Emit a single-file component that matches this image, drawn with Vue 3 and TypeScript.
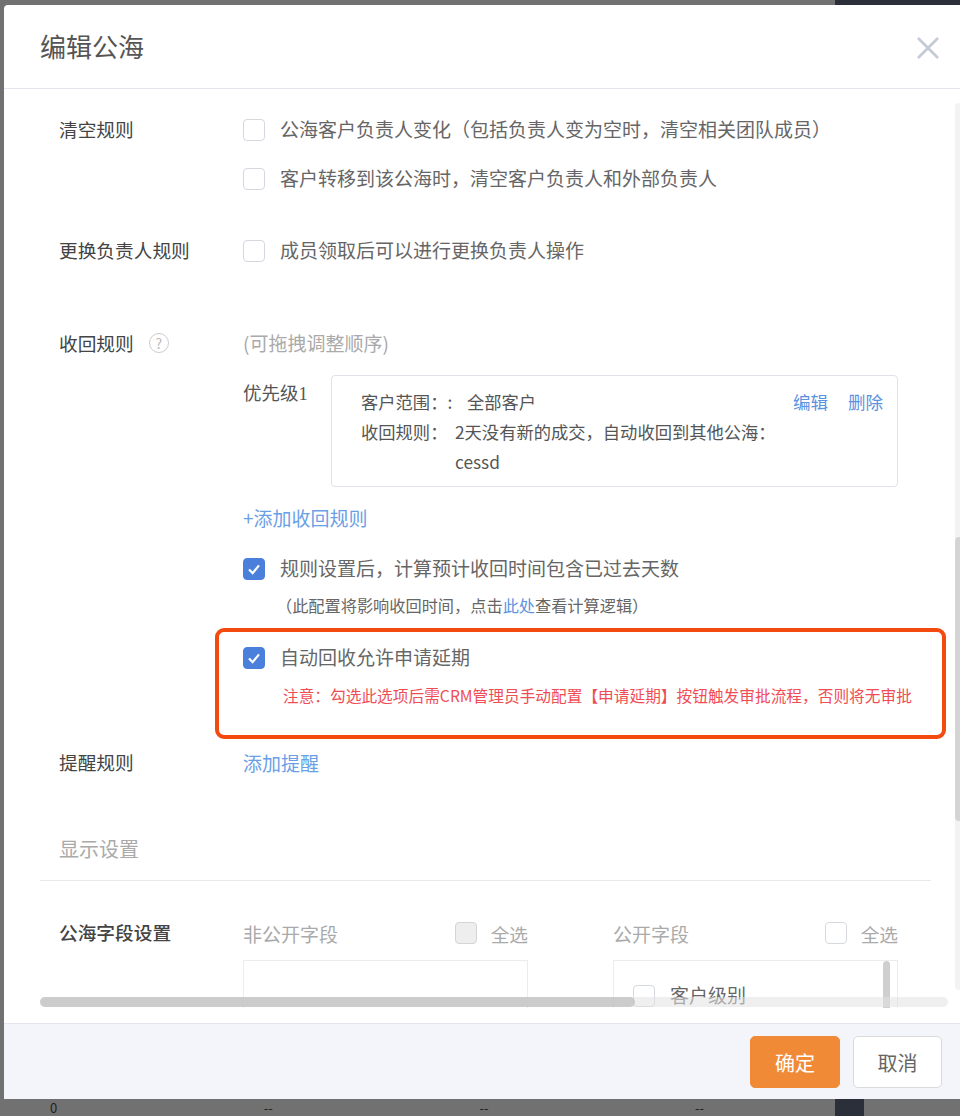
<script setup lang="ts">
interface Opt { text: string; checked?: boolean }
const clearRules: Opt[] = [
  { text: '公海客户负责人变化（包括负责人变为空时，清空相关团队成员）' },
  { text: '客户转移到该公海时，清空客户负责人和外部负责人' },
]
</script>

<template>
  <div class="page">
    <div class="dialog">
      <header class="head">
        <h1>编辑公海</h1>
        <svg class="close" viewBox="0 0 24 24" aria-hidden="true"><path d="M2 2 22 22M22 2 2 22" /></svg>
      </header>

      <main class="body">
        <div class="viewport">
          <section class="row clear">
            <div class="label">清空规则</div>
            <div class="field stack-clear">
              <label v-for="o in clearRules" :key="o.text" class="opt">
                <span class="cb"></span><span class="txt">{{ o.text }}</span>
              </label>
            </div>
          </section>

          <section class="row owner">
            <div class="label">更换负责人规则</div>
            <div class="field">
              <label class="opt"><span class="cb"></span><span class="txt">成员领取后可以进行更换负责人操作</span></label>
            </div>
          </section>

          <section class="row reclaim">
            <div class="label">收回规则<span class="help">?</span></div>
            <div class="field">
              <div class="hint">(可拖拽调整顺序)</div>
              <div class="priority">
                <div class="plabel">优先级1</div>
                <div class="rulecard">
                  <div class="ruletext">
                    <div class="kv"><span class="k k-wide">客户范围：:</span><span>全部客户</span></div>
                    <div class="kv"><span class="k">收回规则：</span><span>2天没有新的成交，自动收回到其他公海：<br />cessd</span></div>
                  </div>
                  <div class="actions"><a>编辑</a><a>删除</a></div>
                </div>
              </div>
              <a class="addrule">+添加收回规则</a>
              <label class="opt opt-calc"><span class="cb on"><svg viewBox="0 0 22 22"><path d="M5.5 11.5 9.5 15.5 16.5 7" /></svg></span><span class="txt">规则设置后，计算预计收回时间包含已过去天数</span></label>
              <div class="note">（此配置将影响收回时间，点击<a>此处</a>查看计算逻辑）</div>
            </div>
          </section>

          <section class="extend">
            <label class="opt"><span class="cb on"><svg viewBox="0 0 22 22"><path d="M5.5 11.5 9.5 15.5 16.5 7" /></svg></span><span class="txt">自动回收允许申请延期</span></label>
            <div class="warn">注意：勾选此选项后需CRM管理员手动配置【申请延期】按钮触发审批流程，否则将无审批</div>
          </section>

          <section class="row remind">
            <div class="label">提醒规则</div>
            <div class="field"><a class="addremind">添加提醒</a></div>
          </section>

          <div class="divider-title">显示设置</div>

          <section class="row fields">
            <div class="label strong">公海字段设置</div>
            <div class="columns">
              <div class="col">
                <div class="colhead"><span>非公开字段</span><span class="all"><span class="cb gray"></span>全选</span></div>
                <div class="colbox"></div>
              </div>
              <div class="col">
                <div class="colhead"><span>公开字段</span><span class="all"><span class="cb"></span>全选</span></div>
                <div class="colbox">
                  <label class="opt item"><span class="cb"></span><span class="txt">客户级别</span></label>
                  <span class="innerbar"></span>
                </div>
              </div>
            </div>
          </section>
        </div>

        <div class="hbar"><span class="hthumb"></span></div>
        <div class="vbar"><span class="vthumb"></span></div>
      </main>

      <footer class="foot">
        <button class="btn primary">确定</button>
        <button class="btn ghost">取消</button>
      </footer>
    </div>
    <div class="under">
      <span>0</span><span>--</span><span>--</span><span>--</span>
    </div>
    <span class="darkcol top"></span>
    <span class="darkcol bottom"></span>
  </div>
</template>

<style>
html, body { margin: 0; background: #717171; }
</style>

<style scoped>
* { box-sizing: border-box; }
.page {
  position: relative;
  width: 960px;
  height: 1116px;
  padding: 5px 0 0 4px;
  overflow: hidden;
  background: #717171;
  font-family: "Noto Sans CJK SC", "Noto Sans", sans-serif;
  color: #555;
  font-size: 19px;
}
.dialog {
  width: 956px;
  height: 1094px;
  display: flex;
  flex-direction: column;
  background: #fff;
  border-radius: 4px 0 0 0;
}
.head {
  height: 84px;
  flex: none;
  display: flex;
  align-items: center;
  justify-content: space-between;
  padding: 0 20px 0 36px;
  border-bottom: 1px solid #e3e6ee;
}
.head h1 { margin: 0 0 2px; font-size: 26px; font-weight: 400; color: #555; }
.close { width: 24px; height: 24px; margin-top: 3px; }
.close path { fill: none; stroke: #c3cad6; stroke-width: 2.6; }
.body {
  position: relative;
  flex: 1;
  min-height: 0;
}
.viewport {
  height: 919px;
  overflow: hidden;
  padding: 0 0 0 55px;
}
.row { display: flex; }
.label {
  width: 184px; height: 26px; flex: none;
  padding-bottom: 2px;
  font-size: 18.7px; line-height: 24px; color: #444;
  display: flex; align-items: center; align-self: flex-start;
}
.label.strong { font-weight: 500; }
.field { flex: 1; min-width: 0; }
.opt { display: flex; align-items: center; gap: 15px; height: 26px; color: #666; white-space: nowrap; }
.txt { margin-bottom: 2px; line-height: 24px; }
.cb {
  width: 22px; height: 22px; flex: none;
  border: 1px solid #d5d8de; border-radius: 4px; background: #fff;
  display: inline-flex; align-items: center; justify-content: center;
}
.cb.on { background: #4a7fdc; border-color: #4a7fdc; }
.cb.on svg { width: 22px; height: 22px; }
.cb.on path { fill: none; stroke: #fff; stroke-width: 2.4; }
.cb.gray { background: #eeeeee; border-color: #d5d5d5; }
.clear { padding-top: 28px; }
.stack-clear { display: flex; flex-direction: column; gap: 23px; }
.owner { margin-top: 46px; }
.reclaim { margin-top: 67px; }
.help {
  width: 20px; height: 20px; margin-left: 15px;
  border: 1px solid #ccc; border-radius: 50%;
  color: #bbb; font-size: 14px; line-height: 18px; text-align: center;
}
.hint { color: #aaa; line-height: 24px; margin-bottom: 2px; height: 24px; }
.priority { display: flex; margin-top: 20px; }
.plabel {
  width: 88px; flex: none; line-height: 26px; color: #555; padding-top: 6px;
  font-family: "Liberation Serif", "Noto Sans CJK SC", serif; font-size: 18.5px;
}
.rulecard {
  width: 567px; height: 112px;
  border: 1px solid #dfe2e8; border-radius: 4px;
  padding: 11px 14px 0 29px;
  display: flex; justify-content: space-between;
  font-size: 17.3px; line-height: 30px; color: #555;
}
.kv { display: flex; }
.k { width: 94px; flex: none; white-space: nowrap; }
.k-wide { width: 106px; }
.kv > span:last-child { max-width: 340px; }
.actions { display: flex; gap: 20px; color: #5b93e0; font-size: 17.5px; line-height: 30px; height: 30px; }
.addrule { display: block; margin-top: 18px; color: #6a9fe6; line-height: 26px; }
.opt-calc { margin-top: 25px; }
.note { margin-top: 11px; margin-left: 33px; font-size: 16.2px; line-height: 24px; color: #666; }
.note a { color: #5b93e0; }
.extend {
  width: 731px; height: 111px;
  margin: 11px 0 0 156px;
  padding: 13px 0 0 24px;
  border: 4px solid #f34a10; border-radius: 9px;
}
.warn { margin: 13px 0 0 40px; font-size: 15.7px; line-height: 24px; color: #ef4d55; white-space: nowrap; }
.remind { margin-top: 10px; }
.remind .label { padding-bottom: 0; }
.addremind { color: #6a9fe6; line-height: 26px; }
.divider-title {
  width: 891px;
  margin: 58px 0 0 -19px;
  padding: 0 0 16px 19px;
  border-bottom: 1px solid #e8e8e8;
  color: #aaa; font-size: 20px; line-height: 30px;
}
.fields { margin-top: 39px; }
.columns { display: flex; gap: 85px; }
.col { width: 285px; }
.colhead { display: flex; justify-content: space-between; align-items: center; height: 26px; color: #aaa; }
.all { display: inline-flex; align-items: center; gap: 14px; font-size: 18.7px; }
.colbox { position: relative; height: 120px; margin-top: 14px; border: 1px solid #ececec; padding: 22px 0 0 19px; }
.item { color: #666; }
.innerbar { position: absolute; right: 7px; top: 0; width: 7px; height: 100%; border-radius: 4px; background: #cfcfcf; }
.hbar {
  position: absolute; left: 36px; top: 908px;
  width: 908px; height: 10px; border-radius: 5px;
  background: rgba(225, 225, 225, .55);
}
.hthumb { display: block; width: 595px; height: 100%; border-radius: 5px; background: rgba(190, 190, 190, .7); }
.vbar { position: absolute; left: 951px; top: 14px; width: 5px; height: 887px; background: #f3f3f3; border-radius: 4px 0 0 4px; }
.vthumb { position: absolute; top: 434px; left: 0; width: 5px; height: 284px; background: #d4d4d4; border-radius: 4px 0 0 4px; }
.foot {
  height: 76px; flex: none;
  display: flex; justify-content: flex-end; align-items: center; gap: 13px;
  padding: 1px 18px 0 0;
  background: #f4f5fa;
  border-top: 1px solid #e3e6ee;
}
.btn {
  width: 90px; height: 52px;
  border: 1px solid #dadada; border-radius: 5px;
  background: #fff; color: #666;
  font: inherit; font-size: 20px;
}
.btn.ghost { width: 89px; }
.btn.primary { background: #f18a36; border-color: #f18a36; color: #fff; }
.under {
  position: absolute; left: 50px; top: 1100px; width: 654px; height: 16px;
  display: flex; justify-content: space-between;
  color: #222; font-size: 13px; line-height: 16px;
}
.darkcol { position: absolute; left: 835px; width: 29px; background: #2b2f3a; }
.darkcol.top { top: 0; height: 5px; width: 125px; }
.darkcol.bottom { top: 1099px; height: 17px; }
</style>
